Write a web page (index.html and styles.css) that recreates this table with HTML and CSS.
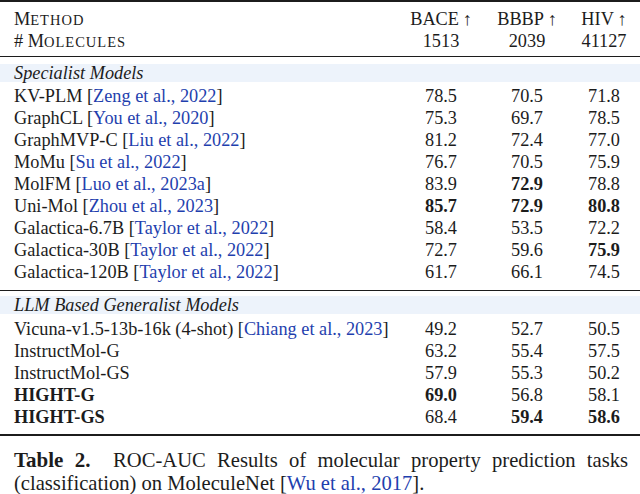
FILE: index.html
```html
<!DOCTYPE html>
<html>
<head>
<meta charset="utf-8">
<link rel="stylesheet" href="styles.css">
</head>
<body>
<div class="table">
  <div class="head">
    <div class="row">
      <div class="name">M<span class="sc">ETHOD</span></div>
      <div class="num">BACE&#8201;↑</div>
      <div class="num">BBBP&#8201;↑</div>
      <div class="num">HIV&#8201;↑</div>
    </div>
    <div class="row">
      <div class="name"># M<span class="sc">OLECULES</span></div>
      <div class="num">1513</div>
      <div class="num">2039</div>
      <div class="num">41127</div>
    </div>
  </div>
  <div class="section first">
    <div class="band">Specialist Models</div>
    <div class="row"><div class="name">KV-PLM <span class="cite">[<a>Zeng et al., 2022</a>]</span></div><div class="num">78.5</div><div class="num">70.5</div><div class="num">71.8</div></div>
    <div class="row"><div class="name">GraphCL <span class="cite">[<a>You et al., 2020</a>]</span></div><div class="num">75.3</div><div class="num">69.7</div><div class="num">78.5</div></div>
    <div class="row"><div class="name">GraphMVP-C <span class="cite">[<a>Liu et al., 2022</a>]</span></div><div class="num">81.2</div><div class="num">72.4</div><div class="num">77.0</div></div>
    <div class="row"><div class="name">MoMu <span class="cite">[<a>Su et al., 2022</a>]</span></div><div class="num">76.7</div><div class="num">70.5</div><div class="num">75.9</div></div>
    <div class="row"><div class="name">MolFM <span class="cite">[<a>Luo et al., 2023a</a>]</span></div><div class="num">83.9</div><div class="num b">72.9</div><div class="num">78.8</div></div>
    <div class="row"><div class="name">Uni-Mol <span class="cite">[<a>Zhou et al., 2023</a>]</span></div><div class="num b">85.7</div><div class="num b">72.9</div><div class="num b">80.8</div></div>
    <div class="row"><div class="name">Galactica-6.7B <span class="cite">[<a>Taylor et al., 2022</a>]</span></div><div class="num">58.4</div><div class="num">53.5</div><div class="num">72.2</div></div>
    <div class="row"><div class="name">Galactica-30B <span class="cite">[<a>Taylor et al., 2022</a>]</span></div><div class="num">72.7</div><div class="num">59.6</div><div class="num b">75.9</div></div>
    <div class="row"><div class="name">Galactica-120B <span class="cite">[<a>Taylor et al., 2022</a>]</span></div><div class="num">61.7</div><div class="num">66.1</div><div class="num">74.5</div></div>
  </div>
  <div class="section second">
    <div class="band">LLM Based Generalist Models</div>
    <div class="row"><div class="name">Vicuna-v1.5-13b-16k (4-shot) <span class="cite">[<a>Chiang et al., 2023</a>]</span></div><div class="num">49.2</div><div class="num">52.7</div><div class="num">50.5</div></div>
    <div class="row"><div class="name">InstructMol-G</div><div class="num">63.2</div><div class="num">55.4</div><div class="num">57.5</div></div>
    <div class="row"><div class="name">InstructMol-GS</div><div class="num">57.9</div><div class="num">55.3</div><div class="num">50.2</div></div>
    <div class="row"><div class="name b">HIGHT-G</div><div class="num b">69.0</div><div class="num">56.8</div><div class="num">58.1</div></div>
    <div class="row"><div class="name b">HIGHT-GS</div><div class="num">68.4</div><div class="num b">59.4</div><div class="num b">58.6</div></div>
  </div>
</div>
<div class="caption">
  <span class="line1"><b class="label">Table 2.</b>&nbsp; ROC-AUC Results of molecular property prediction tasks</span>
  <span class="line2">(classification) on MoleculeNet <span class="cite">[<a>Wu et al., 2017</a>]</span>.</span>
</div>
</body>
</html>
```
FILE: styles.css
```css
html, body {
  margin: 0;
  padding: 0;
  background: #ffffff;
}
body {
  width: 640px;
  height: 494px;
  overflow: hidden;
  font-family: "Liberation Serif", "Times New Roman", serif;
  font-size: 18.3px;
  color: #1c1c1c;
}
.table {
  border-top: 2px solid #1c1c1c;
  border-bottom: 2px solid #1c1c1c;
}
.head {
  padding: 6px 0 4px;
  border-bottom: 1px solid #1c1c1c;
}
.row {
  display: grid;
  grid-template-columns: 1fr 90px 82px 72px;
  height: 22px;
  line-height: 22px;
  padding-left: 14px;
  white-space: nowrap;
}
.num {
  text-align: center;
}
.sc {
  font-size: 14.5px;
  letter-spacing: 1px;
}
.b {
  font-weight: bold;
}
.cite a {
  color: #1f3fae;
}
.section.first {
  padding: 7px 0 7px;
  border-bottom: 1px solid #1c1c1c;
}
.section.second {
  padding: 5px 0 6px;
}
.band {
  height: 18px;
  line-height: 18px;
  background: #edf3fb;
  padding-left: 14px;
  font-style: italic;
  margin-bottom: 3px;
}
.section.second .band {
  margin-bottom: 4px;
}
.caption {
  margin: 13px 12px 0 14px;
  line-height: 23px;
  font-size: 20.6px;
}
.caption .line1 {
  display: block;
  text-align: justify;
  text-align-last: justify;
}
.caption .line2 {
  display: block;
}
.caption .label {
  font-size: 21px;
}
```
